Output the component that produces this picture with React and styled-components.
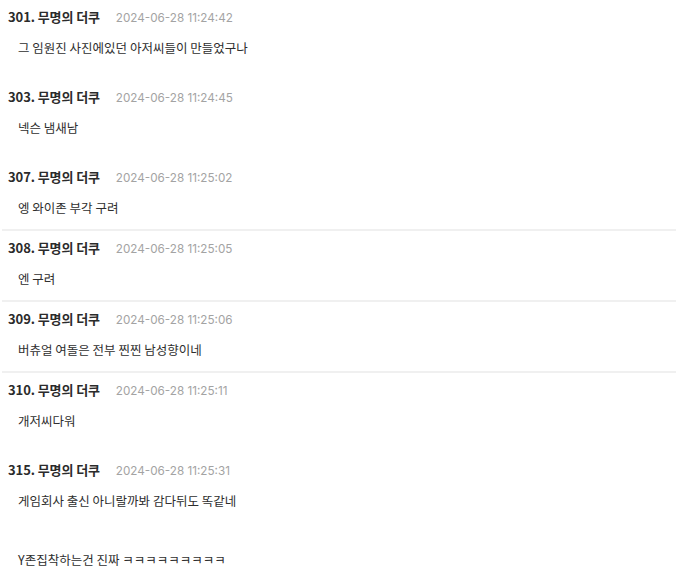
import React from 'react';
import styled, { createGlobalStyle } from 'styled-components';

const GlobalStyle = createGlobalStyle`
  html, body {
    margin: 0;
    padding: 0;
    background: #fff;
  }
  body {
    font-family: "Noto Sans CJK KR", "Noto Sans", sans-serif;
    color: #222;
  }
`;

const comments = [
  { no: 301, date: '2024-06-28 11:24:42', body: ['그 임원진 사진에있던 아저씨들이 만들었구나'] },
  { no: 303, date: '2024-06-28 11:24:45', body: ['넥슨 냄새남'] },
  { no: 307, date: '2024-06-28 11:25:02', body: ['엥 와이존 부각 구려'], divided: true },
  { no: 308, date: '2024-06-28 11:25:05', body: ['엔 구려'], divided: true },
  { no: 309, date: '2024-06-28 11:25:06', body: ['버츄얼 여돌은 전부 찐찐 남성향이네'], divided: true },
  { no: 310, date: '2024-06-28 11:25:11', body: ['개저씨다워'] },
  { no: 315, date: '2024-06-28 11:25:31', body: ['게임회사 출신 아니랄까봐 감다뒤도 똑같네', 'Y존집착하는건 진짜 ㅋㅋㅋㅋㅋㅋㅋㅋㅋ'] },
];

const List = styled.div`
  display: flex;
  flex-direction: column;
  width: 676px;
`;

const Row = styled.div`
  padding: 7px 0 ${p => (p.$divided ? '11px' : '22px')} 0;
  border-bottom: ${p => (p.$divided ? '2px solid #f0f0f0' : 'none')};
  margin-left: 2px;
`;

const Head = styled.div`
  display: flex;
  align-items: baseline;
  gap: 16px;
  height: 20px;
  line-height: 20px;
  padding-left: 6px;
`;

const Name = styled.span`
  font-size: 13px;
  font-weight: 700;
  color: #2b2b2b;
  letter-spacing: -0.1px;
`;

const Stamp = styled.span`
  font-family: Inter, "Noto Sans", sans-serif;
  font-size: 11.7px;
  color: #a3a3a3;
`;

const Body = styled.div`
  display: flex;
  flex-direction: column;
  gap: 39px;
  margin-top: 11px;
  padding-left: 16px;
`;

const Line = styled.p`
  margin: 0;
  font-size: 12.5px;
  line-height: 20px;
  color: #2e2e2e;
`;

export default function App() {
  return (
    <>
      <GlobalStyle />
      <List>
        {comments.map(c => (
          <Row key={c.no} $divided={c.divided}>
            <Head>
              <Name>{c.no}. 무명의 더쿠</Name>
              <Stamp>{c.date}</Stamp>
            </Head>
            <Body>
              {c.body.map((t, i) => (
                <Line key={i}>{t}</Line>
              ))}
            </Body>
          </Row>
        ))}
      </List>
    </>
  );
}
